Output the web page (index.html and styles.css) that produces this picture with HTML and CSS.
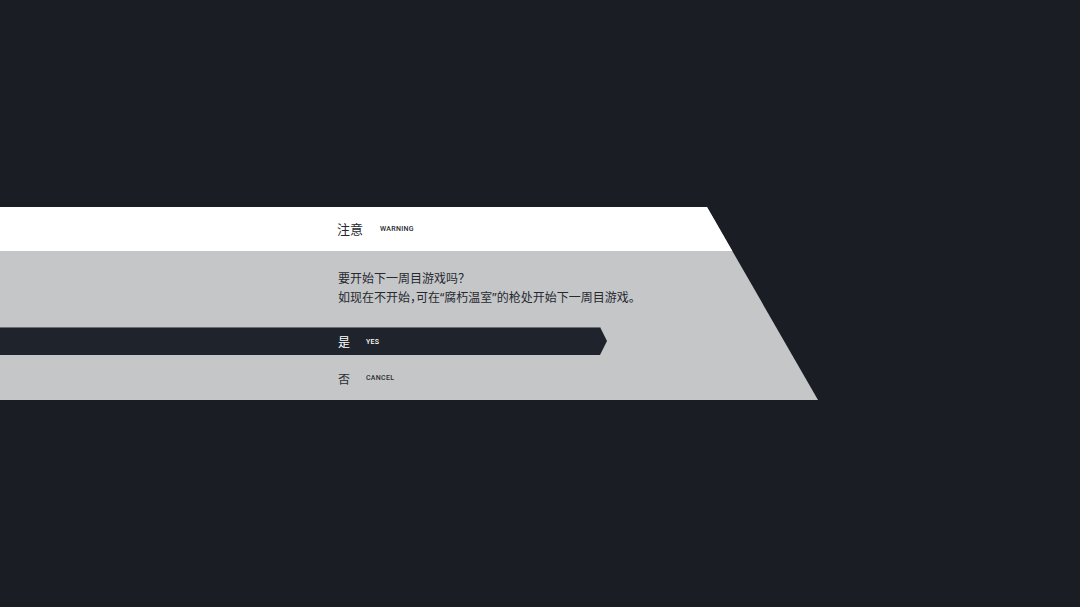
FILE: index.html
```html
<!DOCTYPE html>
<html lang="zh-CN">
<head>
    <meta charset="UTF-8">
    <title>注意</title>
    <link rel="stylesheet" href="styles.css">
</head>
<body>
    <div class="dialog">
        <div class="dialog-head">
            <span class="cn title">注意</span>
            <span class="en">WARNING</span>
        </div>
        <div class="dialog-body">
            <p class="msg">要开始下一周目游戏吗？<br>如现在不开始，可在<span class="quote">“</span>腐朽温室<span class="quote">”</span>的枪处开始下一周目游戏。</p>
            <div class="option selected">
                <span class="cn">是</span>
                <span class="en">YES</span>
            </div>
            <div class="option">
                <span class="cn">否</span>
                <span class="en">CANCEL</span>
            </div>
        </div>
    </div>
</body>
</html>
```

FILE: styles.css
```css
body {
    margin: 0;
    width: 1080px;
    height: 607px;
    background: #1a1d23;
    font-family: "Noto Sans CJK SC", "Noto Sans", sans-serif;
    overflow: hidden;
}

.dialog {
    margin-top: 207px;
    width: 818px;
    height: 193px;
    background: #c5c6c8;
    clip-path: polygon(0 0, 707px 0, 818px 100%, 0 100%);
    display: flex;
    flex-direction: column;
}

.dialog-head {
    height: 44px;
    background: #fff;
    display: flex;
    align-items: center;
    padding-left: 337px;
    color: #25282e;
}

.title {
    font-size: 13px;
    margin-right: 17px;
    margin-top: -1px;
}

.en {
    font-family: "Roboto", "Liberation Sans", sans-serif;
    font-size: 7px;
    font-weight: 500;
    letter-spacing: 0.3px;
}

.dialog-body {
    flex: 1;
    display: flex;
    flex-direction: column;
}

.msg {
    margin: 17px 0 0 338px;
    height: 38px;
    font-size: 12px;
    line-height: 19px;
    font-feature-settings: "halt";
    color: #26292f;
}

.quote {
    font-family: "Noto Sans", sans-serif;
    line-height: 1;
}

.option {
    height: 28px;
    display: flex;
    align-items: center;
    padding-left: 338px;
    color: #2a2d33;
}

.option .cn {
    font-size: 12px;
    width: 28px;
}

.option.selected {
    margin-top: 21px;
    width: 607px;
    box-sizing: border-box;
    background: #1f232c;
    color: #fff;
    border-top: 1px solid #6b6e73;
    clip-path: polygon(0 0, 600px 0, 607px 50%, 600px 100%, 0 100%);
}

.option.selected + .option {
    margin-top: 9px;
}
```
